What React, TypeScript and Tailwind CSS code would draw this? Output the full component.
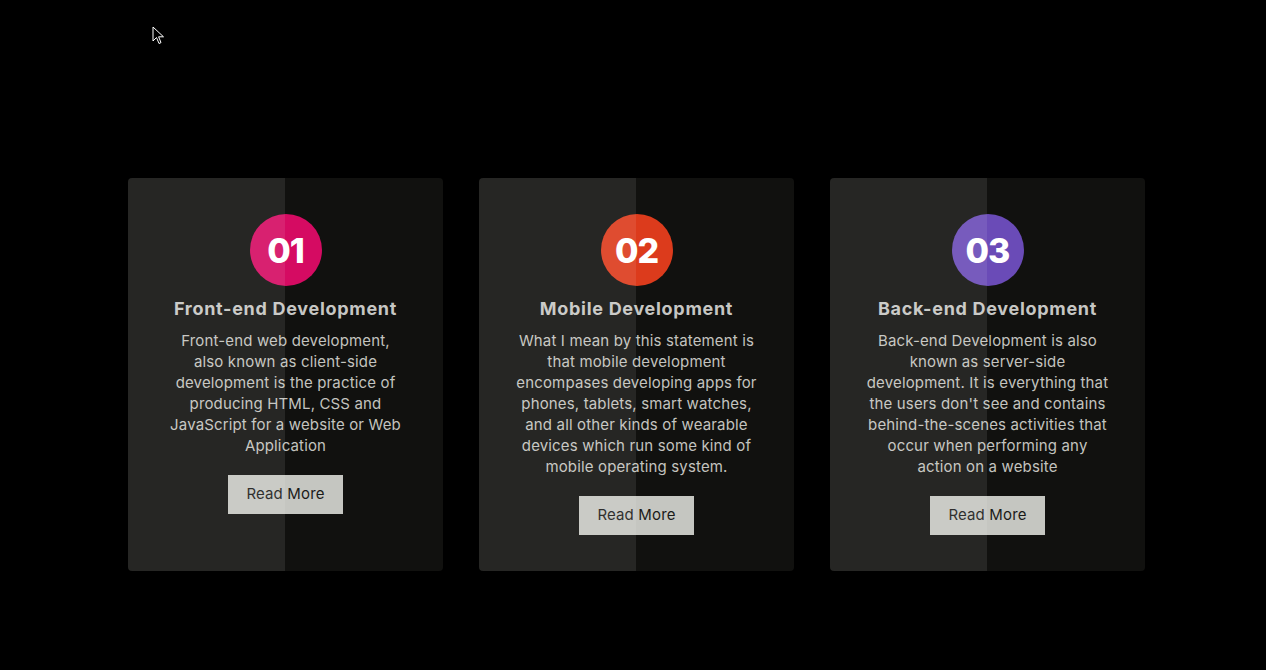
const cards = [
  {
    num: "01",
    color: "bg-[#d50b62]",
    title: "Front-end Development",
    lines: [
      "Front-end web development,",
      "also known as client-side",
      "development is the practice of",
      "producing HTML, CSS and",
      "JavaScript for a website or Web",
      "Application",
    ],
  },
  {
    num: "02",
    color: "bg-[#dc3b1c]",
    title: "Mobile Development",
    lines: [
      "What I mean by this statement is",
      "that mobile development",
      "encompases developing apps for",
      "phones, tablets, smart watches,",
      "and all other kinds of wearable",
      "devices which run some kind of",
      "mobile operating system.",
    ],
  },
  {
    num: "03",
    color: "bg-[#6a4bb7]",
    title: "Back-end Development",
    lines: [
      "Back-end Development is also",
      "known as server-side",
      "development. It is everything that",
      "the users don't see and contains",
      "behind-the-scenes activities that",
      "occur when performing any",
      "action on a website",
    ],
  },
]

function Card({ num, color, title, lines }: (typeof cards)[number]) {
  return (
    <div className="relative w-[315px] rounded bg-[#11110f] overflow-hidden px-4 pt-9 pb-9 flex flex-col items-center text-center">
      <div className={`w-[72px] h-[72px] rounded-full ${color} flex items-center justify-center text-white text-[34px] font-extrabold tracking-[-1px]`}>
        {num}
      </div>
      <h3 className="mt-[9px] text-[18px] leading-[28px] font-bold tracking-[0.7px] text-[#c6c6c3]">{title}</h3>
      <p className="mt-[7px] text-[15px] leading-[21px] tracking-[0.15px] text-[#c3c3bf] whitespace-nowrap">
        {lines.map((l, i) => (
          <span key={i} className="block">
            {l}
          </span>
        ))}
      </p>
      <button className="mt-[19px] h-[39px] px-[18px] bg-[#c5c6c1] text-[#1b1b19] text-[15px] tracking-[0.15px]">Read More</button>
      <div className="pointer-events-none absolute inset-y-0 left-0 w-[157px] bg-white/[0.09]" />
    </div>
  )
}

export default function App() {
  return (
    <div
      className="relative w-full h-[670px] bg-black overflow-hidden"
      style={{ fontFamily: "Inter, 'Noto Sans', sans-serif" }}
    >
      <svg className="absolute left-[152px] top-[26px]" width="13" height="20" viewBox="0 0 13 20">
        <path d="M1 1 L1 15 L4.5 11.5 L7 17.5 L9 16.6 L6.6 10.8 L11.5 10.8 Z" fill="#000" stroke="#fff" strokeWidth="1" />
      </svg>
      <div className="flex items-stretch gap-9 pl-[128px] pt-[178px]">
        {cards.map((c) => (
          <Card key={c.num} {...c} />
        ))}
      </div>
    </div>
  )
}
